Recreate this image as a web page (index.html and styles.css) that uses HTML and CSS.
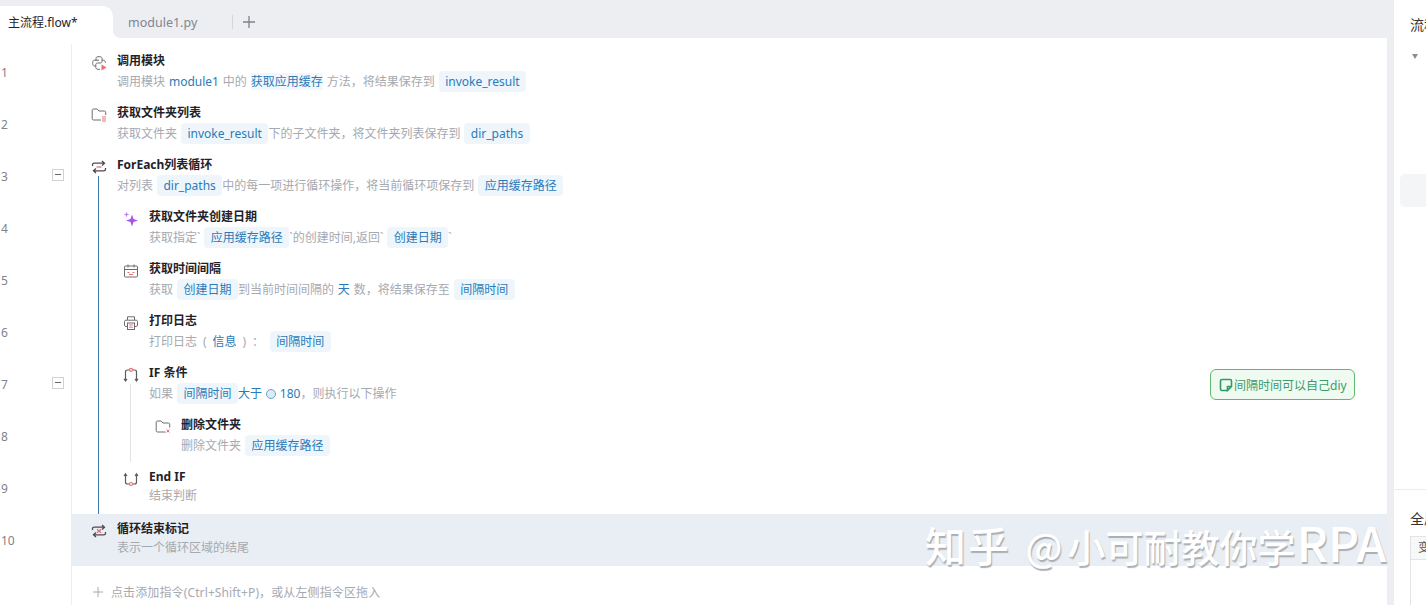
FILE: index.html
```html
<!DOCTYPE html>
<html lang="zh">
<head>
<meta charset="utf-8">
<title>主流程.flow</title>
<link rel="stylesheet" href="styles.css">
</head>
<body>
<div class="app">
  <main class="editor">
    <div class="tabs">
      <div class="tab active">主流程.flow*</div>
      <div class="tab idle">module1.py</div>
      <div class="add"><svg width="14" height="14" viewBox="0 0 14 14"><path d="M7 1v12M1 7h12" stroke="#7d828c" stroke-width="1.3"/></svg></div>
    </div>
    <div class="flow">
      <span class="line blue"></span>
      <span class="line grey"></span>
      <span class="fold f3"></span>
      <span class="fold f7"></span>
      <div class="row">
        <span class="num">1</span>
        <div class="step l0">
          <svg class="ico" viewBox="0 0 16 16" fill="none" stroke="#6f6a70"><path d="M5 6V3.500C5 2.300 5.800 1.700 7 1.700H9C10.200 1.700 11 2.400 11 3.500V6.500C11 7.500 10.300 8 9.500 8H6.500C5.500 8 4.800 8.700 4.800 9.700V11H3.500C2.300 11 1.700 10 1.700 8.500V7.500C1.700 6 2.300 5.200 3.500 5.200H8"/><path d="M11 5.200H12.500C13.700 5.200 14.300 6 14.300 7.500V8M4.800 11V12.500C4.800 13.600 5.600 14.300 6.800 14.300H9"/><path d="M10.500 9.500l5 3-5 3z" fill="#e8716f" stroke="none"/></svg>
          <div class="body"><div class="title">调用模块</div><div class="sub">调用模块 <b>module1</b> 中的 <b class="soft">获取应用缓存</b> 方法，将结果保存到 <i>invoke_result</i></div></div>
        </div>
      </div>
      <div class="row">
        <span class="num">2</span>
        <div class="step l0">
          <svg class="ico" viewBox="0 0 16 16" fill="none" stroke="#6f6a70"><path d="M10 13H2.500C1.700 13 1.200 12.500 1.200 11.800V3.200C1.200 2.500 1.700 2 2.500 2H6.300L8 4H13.500C14.200 4 14.700 4.500 14.700 5.200V8"/><path d="M11 10h4M11 12h4M11 14h4" stroke="#e8716f"/></svg>
          <div class="body"><div class="title">获取文件夹列表</div><div class="sub">获取文件夹 <i>invoke_result</i>下的子文件夹，将文件夹列表保存到 <i>dir_paths</i></div></div>
        </div>
      </div>
      <div class="row">
        <span class="num">3</span>
        <div class="step l0">
          <svg class="ico" viewBox="0 0 16 16" fill="none" stroke="#4f4a50" stroke-width="1.300"><path d="M1.500 7V5.800C1.500 4.800 2.200 4.200 3.200 4.200H13.500M11 2L13.500 4.200 11 6.400M14.500 9V10.200C14.500 11.200 13.800 11.800 12.800 11.800H2.500M5 9.600L2.500 11.800 5 14"/><path d="M5.500 8h5" stroke="#e8716f"/></svg>
          <div class="body"><div class="title">ForEach列表循环</div><div class="sub">对列表 <i>dir_paths</i>中的每一项进行循环操作，将当前循环项保存到 <i>应用缓存路径</i></div></div>
        </div>
      </div>
      <div class="row">
        <span class="num">4</span>
        <div class="step l1">
          <svg class="ico" viewBox="0 0 16 16"><path d="M9 3.500L10.500 8 15 9.500 10.500 11 9 15.500 7.500 11 3 9.500 7.500 8z" fill="#a655e8"/><path d="M3.500 .5L4.300 2.700 6.500 3.500 4.300 4.300 3.500 6.500 2.700 4.300 .5 3.500 2.700 2.700z" fill="#c489f0"/></svg>
          <div class="body"><div class="title">获取文件夹创建日期</div><div class="sub">获取指定` <i>应用缓存路径</i>`的创建时间,返回` <i>创建日期</i>`</div></div>
        </div>
      </div>
      <div class="row">
        <span class="num">5</span>
        <div class="step l1">
          <svg class="ico" viewBox="0 0 16 16" fill="none" stroke="#6f6a70"><rect x="1.500" y="3" width="13" height="11" rx="1"/><path d="M1.500 6.500h13M5 1.500v3M11 1.500v3"/><path d="M4.500 9.500h2M9.500 9.500h2M6 11.500h4" stroke="#e8716f"/></svg>
          <div class="body"><div class="title">获取时间间隔</div><div class="sub">获取 <i>创建日期</i>到当前时间间隔的 <b>天</b> 数，将结果保存至 <i>间隔时间</i></div></div>
        </div>
      </div>
      <div class="row">
        <span class="num">6</span>
        <div class="step l1">
          <svg class="ico" viewBox="0 0 16 16" fill="none" stroke="#6f6a70"><path d="M4.500 5V1.800H11.500V5M4 11.500H2.800C2 11.500 1.500 11 1.500 10.200V6.500C1.500 5.700 2 5.200 2.800 5.200H13.200C14 5.200 14.500 5.700 14.500 6.500V10.200C14.500 11 14 11.500 13.200 11.500H12"/><rect x="4.500" y="8" width="7" height="6.500"/><path d="M6.200 10h3.600M6.200 12.200h3.600" stroke="#e8716f"/></svg>
          <div class="body"><div class="title">打印日志</div><div class="sub">打印日志 <s>(</s> <b>信息</b> <s>)</s> ： <i class="far">间隔时间</i></div></div>
        </div>
      </div>
      <div class="row">
        <span class="num">7</span>
        <div class="step l1">
          <svg class="ico" viewBox="0 0 16 16" fill="none" stroke="#5f5a60" stroke-width="1.200"><path d="M2.500 14V5C2.500 3.600 3.300 3 4.500 3H6M13.500 14V5C13.500 3.600 12.700 3 11.500 3H10M1 11.800l1.500 2.200L4 11.800M12 11.800l1.500 2.200 1.500-2.200"/><circle cx="8" cy="2.800" r="1.500" stroke="#e8716f"/></svg>
          <div class="body"><div class="title">IF 条件</div><div class="sub">如果 <i>间隔时间</i><b>大于</b> <em></em> <b>180</b>，则执行以下操作</div></div>
        </div>
      </div>
      <div class="row">
        <span class="num">8</span>
        <div class="step l2">
          <svg class="ico" viewBox="0 0 16 16" fill="none" stroke="#6f6a70"><path d="M10.500 13H2.500C1.700 13 1.200 12.500 1.200 11.800V3.200C1.200 2.500 1.700 2 2.500 2H6.300L8 4H13.500C14.200 4 14.700 4.500 14.700 5.200V8.500"/><path d="M11.500 10.500l3 3M14.500 10.500l-3 3" stroke="#e8716f"/></svg>
          <div class="body"><div class="title">删除文件夹</div><div class="sub">删除文件夹 <i>应用缓存路径</i></div></div>
        </div>
      </div>
      <div class="row">
        <span class="num">9</span>
        <div class="step l1">
          <svg class="ico" viewBox="0 0 16 16" fill="none" stroke="#5f5a60" stroke-width="1.200"><path d="M2.500 3V11C2.500 12.400 3.300 13 4.500 13H6M13.500 3V11C13.500 12.400 12.700 13 11.500 13H10M1 5l1.500-2.200L4 5M12 5l1.500-2.200L15 5"/><circle cx="8" cy="13" r="1.500" stroke="#e8716f"/></svg>
          <div class="body"><div class="title">End IF</div><div class="sub tight">结束判断</div></div>
        </div>
      </div>
      <div class="row current">
        <span class="num">10</span>
        <div class="step l0">
          <svg class="ico" viewBox="0 0 16 16" fill="none" stroke="#4f4a50" stroke-width="1.300"><path d="M1.500 7V5.800C1.500 4.800 2.200 4.200 3.200 4.200H13.500M11 2L13.500 4.200 11 6.400M14.500 9V10.200C14.500 11.200 13.800 11.800 12.800 11.800H2.500M5 9.600L2.500 11.800 5 14"/><path d="M6 6.200l4 3.600M10 6.200l-4 3.600" stroke="#e8716f"/></svg>
          <div class="body"><div class="title">循环结束标记</div><div class="sub tight">表示一个循环区域的结尾</div></div>
        </div>
      </div>
      <div class="hint">
        <svg width="12" height="12" viewBox="0 0 12 12"><path d="M6 1v10M1 6h10" stroke="#a5a8ae"/></svg>
        <span>点击添加指令(Ctrl+Shift+P)，或从左侧指令区拖入</span>
      </div>
      <div class="note">
        <svg width="14" height="14" viewBox="0 0 14 14" fill="none" stroke="#2f9a68" stroke-width="1.600"><path d="M8.500 12.500H3C2 12.500 1.500 12 1.500 11V3C1.500 2 2 1.500 3 1.500H11C12 1.500 12.500 2 12.500 3V8.500L8.500 12.500V8.500H12.500"/></svg>
        <span>间隔时间可以自己diy</span>
      </div>
      <div class="mark"><span class="mark-logo">知乎</span> <span class="mark-at">@</span>小可耐教你学<span class="mark-latin">RPA</span></div>
    </div>
  </main>
  <aside class="side">
    <div class="side-title">流程</div>
    <div class="caret"></div>
    <div class="chip"></div>
    <div class="global">
      <div class="side-title">全局</div>
      <div class="table"><div class="thead">变量</div></div>
    </div>
  </aside>
</div>
</body>
</html>
```
FILE: styles.css
```css
* { box-sizing: border-box; }
html, body { margin: 0; height: 100%; overflow: hidden; }
body {
  font-family: "Noto Sans", "Noto Sans CJK SC", sans-serif;
  font-size: 12px;
  color: #1f2329;
  background: #fff;
}
.app { display: flex; width: 1426px; height: 605px; overflow: hidden; }
.editor {
  width: 1394px;
  flex: none;
  display: flex;
  flex-direction: column;
  background: #edeef2;
  padding-right: 7px;
}
.tabs { height: 38px; flex: none; display: flex; align-items: flex-end; margin-right: -7px; }
.tab { height: 32px; line-height: 34px; white-space: nowrap; }
.tab.active { width: 113px; padding-left: 8px; font-size: 12px; background: #fff; border-top-right-radius: 10px; position: relative; }
.tab.active::after {
  content: "";
  position: absolute;
  right: -8px;
  bottom: 0;
  width: 8px;
  height: 8px;
  background: radial-gradient(circle at 100% 0, transparent 8px, #fff 8px);
}
.tab.idle { width: 120px; padding-left: 15px; font-size: 12.500px; color: #80858f; position: relative; }
.tab.idle::after { content: ""; position: absolute; right: 0; top: 9px; height: 14px; border-right: 1px solid #d4d6db; }
.add { height: 32px; margin-left: 9px; display: flex; align-items: center; }
.flow { flex: 1; position: relative; background: #fff; padding-top: 8px; }
.flow::before { content: ""; position: absolute; left: 71px; top: 6px; bottom: 0; border-left: 1px solid #eceef1; }
.row { height: 52px; display: flex; }
.row.current { background: linear-gradient(to right, #fff 72px, #e9eef4 72px); }
.num { width: 72px; flex: none; padding: 19px 0 0 1px; color: #7f838a; font-size: 12px; line-height: 16px; }
.step { display: flex; padding-top: 6px; }
.l0 { padding-left: 19px; }
.l1 { padding-left: 51px; }
.l2 { padding-left: 83px; }
.ico { width: 16px; height: 16px; margin: 3px 10px 0 0; flex: none; }
.body { display: flex; flex-direction: column; }
.title { font-weight: 700; height: 20px; line-height: 18px; font-size: 12px; color: #1f2329; white-space: nowrap; }
.sub { height: 20px; line-height: 20px; color: #a6a9b0; white-space: nowrap; font-size: 12px; word-spacing: .8px; }
.sub.tight { margin-top: -2px; }
.sub b { font-weight: 400; color: #2a7ab8; }
.sub b.soft { background: #f1f7fc; }
.sub s { text-decoration: none; margin: 0 2px; }
.sub i { font-style: normal; color: #2a7ab8; background: #eef6fc; border-radius: 4px; padding: 2px 6.500px; }
.sub i.far { margin-left: 2px; }
.sub em { display: inline-block; width: 10px; height: 10px; border: 1px solid #6ba3cf; border-radius: 50%; vertical-align: -1px; background: #dcebf6; }
.line { position: absolute; width: 1px; }
.line.blue { left: 98px; top: 138px; height: 338px; background: #3f78ad; }
.line.grey { left: 130px; top: 346px; height: 78px; background: #e1e3e6; }
.fold { position: absolute; left: 52px; width: 12px; height: 12px; border: 1px solid #cfd2d6; background: #fff; }
.fold::after { content: ""; position: absolute; left: 2px; right: 2px; top: 4px; border-top: 1px solid #666; }
.f3 { top: 131px; }
.f7 { top: 339px; }
.hint { height: 39px; display: flex; align-items: center; gap: 7px; padding: 13px 0 0 92px; color: #a6a9b0; letter-spacing: .12px; white-space: nowrap; }
.note {
  position: absolute;
  left: 1210px;
  top: 331px;
  width: 145px;
  height: 31px;
  display: flex;
  align-items: center;
  gap: 1px;
  padding-left: 8px;
  font-size: 12px;
  white-space: nowrap;
  color: #3c9a6e;
  background: #effbf0;
  border: 1px solid #62b96b;
  border-radius: 6px;
}
.mark {
  position: absolute;
  left: 925px;
  top: 477px;
  font-family: "Noto Sans CJK SC", sans-serif;
  font-size: 38px;
  font-weight: 500;
  line-height: 58px;
  color: #fff;
  text-shadow: 1px 2px 1px #a9adb4;
  white-space: nowrap;
}
.mark-logo { font-size: 41px; letter-spacing: 2px; margin-right: 6px; }
.mark-at { margin-right: 5px; }
.mark-latin { font-size: 48px; line-height: 40px; margin-left: 1px; }
.side { flex: 1; min-width: 0; background: #fff; display: flex; flex-direction: column; overflow: hidden; position: relative; }
.side-title { font-size: 14px; line-height: 20px; padding-left: 16px; color: #333; white-space: nowrap; }
.side > .side-title { margin-top: 15px; }
.caret { margin: 19px 0 0 18px; width: 0; height: 0; border: 3.500px solid transparent; border-top: 5px solid #8a8d93; border-bottom: 0; flex: none; }
.chip { margin: 115px 0 0 6px; height: 33px; flex: none; border-radius: 5px 0 0 5px; background: #f4f5f7; }
.global { margin-top: 282px; border-top: 1px solid #ececef; padding-top: 19px; flex: 1; }
.table { margin: 7px 0 0 16px; width: 40px; height: 80px; border: 1px solid #e3e4e8; }
.thead { height: 23px; line-height: 22px; padding-left: 7px; border-bottom: 1px solid #e3e4e8; background: #f7f8fa; color: #555; white-space: nowrap; overflow: hidden; }
```
